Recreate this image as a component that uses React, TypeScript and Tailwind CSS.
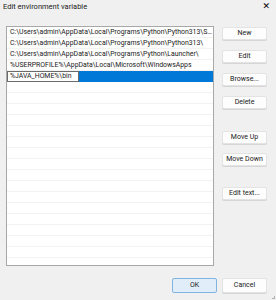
const paths = [
  "C:\\Users\\admin\\AppData\\Local\\Programs\\Python\\Python313\\Scripts\\",
  "C:\\Users\\admin\\AppData\\Local\\Programs\\Python\\Python313\\",
  "C:\\Users\\admin\\AppData\\Local\\Programs\\Python\\Launcher\\",
  "%USERPROFILE%\\AppData\\Local\\Microsoft\\WindowsApps",
];

const emptyRows = Array.from({ length: 17 });

function SideButton({ label, className = "" }: { label: string; className?: string }) {
  return (
    <button
      type="button"
      className={`w-[45px] h-[13px] bg-[#fdfdfd] border border-[#e3e3e3] rounded-[2px] text-[7px] leading-none text-[#1a1a1a] whitespace-nowrap shadow-[0_1px_0_#d6d6d6] ${className}`}
    >
      {label}
    </button>
  );
}

export default function App() {
  return (
    <div
      className="w-[276px] h-[300px] bg-[#f0f0f0] flex flex-col relative overflow-hidden"
      style={{ fontFamily: 'Roboto, "Noto Sans", sans-serif' }}
    >
      {/* title bar */}
      <div className="h-[13px] grid grid-cols-[1fr_auto] items-center pl-[3px] pr-[6px]">
        <span className="text-[7.5px] text-[#1a1a1a]">Edit environment variable</span>
        <span
          className="text-[9px] leading-none text-[#000]"
          style={{ fontFamily: '"DejaVu Sans", sans-serif' }}
        >
          ✕
        </span>
      </div>

      <div className="flex pt-[13px] pl-[6px]">
        {/* path list */}
        <div className="w-[208px] h-[240px] bg-white border border-[#a8a8a8] overflow-hidden flex flex-col">
          {paths.map((p) => (
            <div
              key={p}
              className="h-[11px] shrink-0 border-b border-[#f2f2f2] pl-[3px] text-[6.9px] leading-[10px] text-[#1a1a1a] whitespace-nowrap overflow-hidden text-ellipsis"
            >
              {p}
            </div>
          ))}
          <div className="h-[11px] shrink-0 flex bg-[#0078d7]">
            <div className="w-[72px] h-[11px] bg-white border border-[#6b6b6b] pl-[2px] text-[6.9px] leading-[9px] text-[#1a1a1a] whitespace-nowrap">
              %JAVA_HOME%\bin
            </div>
          </div>
          {emptyRows.map((_, i) => (
            <div key={i} className="h-[11px] shrink-0 border-b border-[#f2f2f2]" />
          ))}
        </div>

        {/* buttons */}
        <div className="flex flex-col ml-[8px] pt-[1px]">
          <SideButton label="New" />
          <SideButton label="Edit" className="mt-[10px]" />
          <SideButton label="Browse..." className="mt-[10px]" />
          <SideButton label="Delete" className="mt-[10px]" />
          <SideButton label="Move Up" className="mt-[22px]" />
          <SideButton label="Move Down" className="mt-[9px]" />
          <SideButton label="Edit text..." className="mt-[21px]" />
        </div>
      </div>

      {/* footer */}
      <div className="flex justify-end gap-[5px] pr-[9px] mt-[12px]">
        <button
          type="button"
          className="w-[45px] h-[15px] bg-[#e1eefa] border border-[#7fb4e3] rounded-[2px] text-[7px] leading-none text-[#1a1a1a]"
        >
          OK
        </button>
        <button
          type="button"
          className="w-[45px] h-[15px] bg-[#fdfdfd] border border-[#e3e3e3] rounded-[2px] text-[7px] leading-none text-[#1a1a1a] shadow-[0_1px_0_#d6d6d6]"
        >
          Cancel
        </button>
      </div>

      {/* resize grip */}
      <div className="absolute right-[1px] bottom-[1px] w-[3px] h-[3px] border-r border-b border-[#b0b0b0]" />
    </div>
  );
}
